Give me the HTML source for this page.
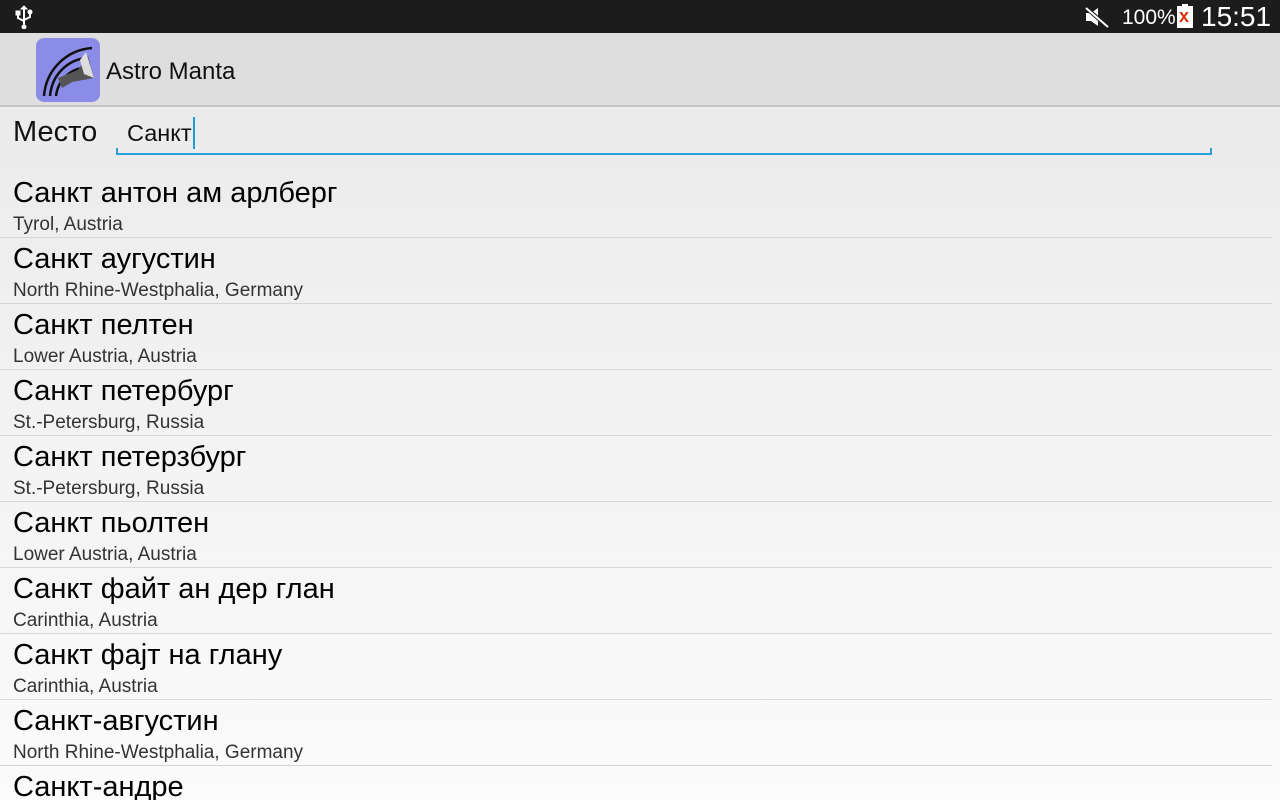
<!DOCTYPE html>
<html><head><meta charset="utf-8"><style>
*{margin:0;padding:0;box-sizing:border-box}
html{width:1280px;height:800px;overflow:hidden;background:#fbfbfb}
body{width:1280px;height:800px;overflow:hidden;font-family:"Liberation Sans","DejaVu Sans",sans-serif;background:linear-gradient(#ebebeb 110px,#f2f2f2 400px,#fbfbfb 800px);position:relative}
.sb{position:absolute;top:0;left:0;width:1280px;height:33px;background:#1c1c1c;color:#fff}
.ab{position:absolute;top:33px;left:0;width:1280px;height:74px;background:#dedede;border-bottom:2px solid #c4c4c4}
.t{position:absolute;white-space:nowrap}
.row{position:absolute;left:0;width:1272px;height:66px;border-bottom:1px solid #d6d6d6}
.row .a{position:absolute;left:13px;top:5px;font-size:29px;color:#000}
.row .b{position:absolute;left:13px;top:42px;font-size:19px;color:#333}
</style></head><body>
<div class="sb">
<svg style="position:absolute;left:14px;top:5px" width="20" height="24" viewBox="0 0 20 24" fill="#fff" stroke="#fff"><line x1="10" y1="2" x2="10" y2="22" stroke-width="2"/><path d="M4 9v4l6 3M16 8v4l-6 3" fill="none" stroke-width="2"/><circle cx="10" cy="22" r="2"/><rect x="2" y="6" width="4" height="4"/><circle cx="16" cy="7" r="2"/><path d="M7 4l3-3 3 3z"/></svg>
<svg style="position:absolute;left:1084px;top:6px" width="26" height="22" viewBox="0 0 26 22"><path d="M2 7h5l7-5v18l-7-5H2z" fill="#fff"/><line x1="1" y1="1" x2="24" y2="21" stroke="#1c1c1c" stroke-width="4"/><line x1="2" y1="2" x2="24" y2="21" stroke="#fff" stroke-width="2"/></svg>
<div class="t" style="left:1122px;top:6px;font-size:21px">100%</div>
<div style="position:absolute;left:1177px;top:6px;width:16px;height:22px;background:#fff"><div style="position:absolute;left:5px;top:-2px;width:6px;height:3px;background:#fff"></div><div style="color:#e03010;font-size:18px;font-weight:bold;position:absolute;left:2px;top:0">x</div></div>
<div class="t" style="left:1201px;top:1px;font-size:28px">15:51</div>
</div>
<div class="ab">
<svg style="position:absolute;left:36px;top:5px" width="64" height="64" viewBox="0 0 64 64"><rect width="64" height="64" rx="8" fill="#8b8be8"/><path d="M8 58C10 32 30 12 56 10M14 58C16 36 32 22 50 20M20 58C22 42 34 32 46 30" fill="none" stroke="#111" stroke-width="2.5"/><path d="M22 40l20-8 10-14 6 22-22 4-10 6z" fill="#555"/><path d="M44 22l6-8 8 26-10-4z" fill="#ddd"/></svg>
<div class="t" style="left:106px;top:25px;font-size:24px;color:#111">Astro Manta</div>
</div>
<div class="t" style="left:13px;top:116px;font-size:29px;color:#111">Место</div>
<div class="t" style="left:127px;top:120px;font-size:23.5px;color:#111">Санкт</div>
<div style="position:absolute;left:193px;top:117px;width:2px;height:32px;background:#1e9ad6"></div>
<div style="position:absolute;left:116px;top:153px;width:1096px;height:2px;background:#2ea0d8"></div>
<div style="position:absolute;left:116px;top:148px;width:2px;height:7px;background:#2ea0d8"></div>
<div style="position:absolute;left:1210px;top:148px;width:2px;height:7px;background:#2ea0d8"></div>
<div class="row" style="top:172px"><div class="a">Санкт антон ам арлберг</div><div class="b">Tyrol, Austria</div></div>
<div class="row" style="top:238px"><div class="a">Санкт аугустин</div><div class="b">North Rhine-Westphalia, Germany</div></div>
<div class="row" style="top:304px"><div class="a">Санкт пелтен</div><div class="b">Lower Austria, Austria</div></div>
<div class="row" style="top:370px"><div class="a">Санкт петербург</div><div class="b">St.-Petersburg, Russia</div></div>
<div class="row" style="top:436px"><div class="a">Санкт петерзбург</div><div class="b">St.-Petersburg, Russia</div></div>
<div class="row" style="top:502px"><div class="a">Санкт пьолтен</div><div class="b">Lower Austria, Austria</div></div>
<div class="row" style="top:568px"><div class="a">Санкт файт ан дер глан</div><div class="b">Carinthia, Austria</div></div>
<div class="row" style="top:634px"><div class="a">Санкт фајт на глану</div><div class="b">Carinthia, Austria</div></div>
<div class="row" style="top:700px"><div class="a">Санкт-августин</div><div class="b">North Rhine-Westphalia, Germany</div></div>
<div class="row" style="top:766px;border:none"><div class="a">Санкт-андре</div></div>
</body></html>
